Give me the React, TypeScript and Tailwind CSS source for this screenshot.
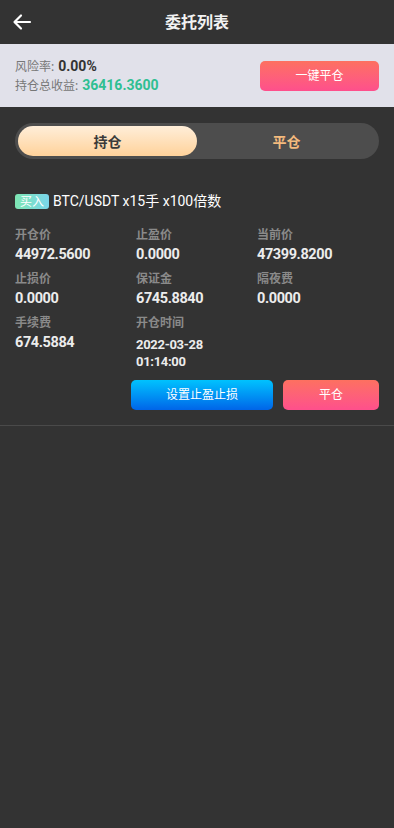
import React from "react";

const F = { fontFamily: '"Noto Sans", "Noto Sans CJK SC", sans-serif' };
const N = { fontFamily: 'Roboto, "Noto Sans CJK SC", sans-serif' };

function Cell({ label, value }: { label: string; value: string }) {
  return (
    <div className="flex flex-col">
      <div className="text-[12px] leading-[16px] font-bold text-[#8a8a8a]">{label}</div>
      <div className="mt-[2px] text-[14.5px] tracking-[-0.4px] leading-[20px] font-bold text-[#ececec]" style={N}>{value}</div>
    </div>
  );
}

export default function App() {
  return (
    <div className="w-[394px] h-[828px] bg-[#333333] flex flex-col" style={F}>
      <div className="h-[44px] bg-[#333333] flex items-center relative">
        <div className="absolute left-[12px] top-[12px]">
          <svg width="20" height="20" viewBox="0 0 20 20" fill="none" stroke="#ffffff" strokeWidth="2.2" strokeLinecap="round" strokeLinejoin="round">
            <path d="M18 10H3M9 3.5L2.5 10L9 16.5" />
          </svg>
        </div>
        <div className="w-full text-center text-[16px] font-bold text-[#f2f2f2]">委托列表</div>
      </div>
      <div className="h-[63px] bg-[#e1e1ea] flex items-center justify-between pl-[15px] pr-[15px]">
        <div className="flex flex-col">
          <div className="flex items-baseline">
            <span className="text-[12px] text-[#777] leading-[18px]">风险率:</span>
            <span className="ml-[4px] text-[14px] font-bold text-[#333] leading-[18px]" style={N}>0.00%</span>
          </div>
          <div className="flex items-baseline">
            <span className="text-[12px] text-[#777] leading-[18px]">持仓总收益:</span>
            <span className="ml-[4px] text-[14px] font-bold text-[#2fbf92] leading-[18px]" style={N}>36416.3600</span>
          </div>
        </div>
        <div className="w-[119px] h-[30px] rounded-[5px] bg-gradient-to-b from-[#fd7060] to-[#fe4f8c] flex items-center justify-center text-[12px] text-white">一键平仓</div>
      </div>
      <div className="px-[15px] pt-[16px]">
        <div className="h-[36px] rounded-full bg-[#4d4d4d] p-[3px] flex">
          <div className="w-[179px] rounded-full bg-gradient-to-b from-[#ffeed9] to-[#ffd29a] flex items-center justify-center text-[14px] font-bold text-[#3a3a3a]">持仓</div>
          <div className="flex-1 flex items-center justify-center text-[14px] font-bold text-[#f5bb7d]">平仓</div>
        </div>
      </div>
      <div className="px-[15px] pt-[32px] border-b border-[#4a4a4a] pb-[15px]">
        <div className="flex items-center">
          <span className="w-[34px] h-[15px] rounded-[3px] bg-gradient-to-r from-[#7ee6b2] to-[#7ad4ea] text-white text-[12px] leading-[15px] text-center">买入</span>
          <span className="ml-[4px] text-[14px] text-white" style={N}>BTC/USDT x15手 x100倍数</span>
        </div>
        <div className="mt-[15px] grid grid-cols-[121px_121px_1fr] gap-y-[6px]">
          <Cell label="开仓价" value="44972.5600" />
          <Cell label="止盈价" value="0.0000" />
          <Cell label="当前价" value="47399.8200" />
          <Cell label="止损价" value="0.0000" />
          <Cell label="保证金" value="6745.8840" />
          <Cell label="隔夜费" value="0.0000" />
          <Cell label="手续费" value="674.5884" />
          <div className="flex flex-col">
            <div className="text-[12px] leading-[16px] font-bold text-[#8a8a8a]">开仓时间</div>
            <div className="mt-[5px] text-[13px] tracking-[-0.3px] leading-[17px] font-bold text-[#ececec]" style={N}>2022-03-28</div>
            <div className="text-[13px] tracking-[-0.3px] leading-[17px] font-bold text-[#ececec]" style={N}>01:14:00</div>
          </div>
        </div>
        <div className="mt-[10px] flex justify-end gap-[10px]">
          <div className="w-[142px] h-[30px] rounded-[5px] bg-gradient-to-b from-[#00c2fe] to-[#0064e8] flex items-center justify-center text-[12px] text-white">设置止盈止损</div>
          <div className="w-[96px] h-[30px] rounded-[5px] bg-gradient-to-b from-[#fd7060] to-[#fe4f8c] flex items-center justify-center text-[12px] text-white">平仓</div>
        </div>
      </div>
    </div>
  );
}
